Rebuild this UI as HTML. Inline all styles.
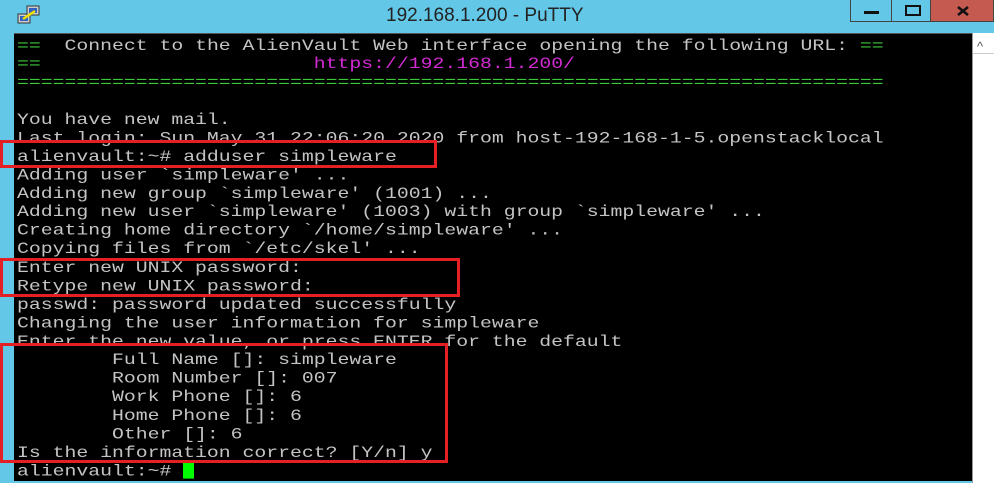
<!DOCTYPE html>
<html><head><style>
body{margin:0;width:994px;height:483px;overflow:hidden;background:#63c8e8;position:relative;font-family:"Liberation Sans",sans-serif}
.title{position:absolute;left:0;top:0;width:994px;height:33px;background:#63c8e8}
.ttext{position:absolute;left:386px;top:5px;font-size:19px;color:#222}
.btn{position:absolute;top:0;height:22px;border:1px solid #444;border-top:none;box-sizing:border-box}
.term{position:absolute;left:14px;top:33px;width:958px;height:447px;background:#000;border-top:1px solid #555}
.sb{position:absolute;left:972px;top:33px;width:22px;height:450px;background:#fff;border-left:1px solid #999}
pre{position:absolute;left:17px;top:37px;margin:0;font-family:"Liberation Mono",monospace;font-size:19.8px;line-height:23.125px;color:#c4c4c4;transform:scale(1,.8);transform-origin:0 0;letter-spacing:0}
.g{color:#3cc83c}.m{color:#d42ad4}
.box{position:absolute;border:3px solid #e52025;box-sizing:border-box}
.cur{display:inline-block;width:11px;height:20px;background:#0f0;vertical-align:-4px}
</style></head><body>
<div class="title">
<svg style="position:absolute;left:17px;top:5px" width="24" height="20"><rect x="1" y="9" width="12" height="9" fill="#ccc" stroke="#333"/><rect x="10" y="1" width="12" height="9" fill="#ccc" stroke="#333"/><rect x="3" y="11" width="8" height="5" fill="#3060c0"/><rect x="12" y="3" width="8" height="5" fill="#3060c0"/><path d="M6 14 L18 6" stroke="#f0e000" stroke-width="2.5"/></svg>
<div class="ttext">192.168.1.200 - PuTTY</div>
<div class="btn" style="left:850px;width:42px"><div style="position:absolute;left:13px;top:11px;width:15px;height:3px;background:#111"></div></div>
<div class="btn" style="left:891px;width:40px"><div style="position:absolute;left:13px;top:5px;width:12px;height:7px;border:2px solid #111"></div></div>
<div class="btn" style="left:930px;width:64px;background:#c55a50"><svg style="position:absolute;left:26px;top:6px" width="12" height="10"><path d="M1 1 L11 9 M11 1 L1 9" stroke="#111" stroke-width="2.6"/></svg></div>
</div>
<div class="term"></div>
<div class="sb"><div style="position:absolute;left:4px;top:6px;font-size:13px;color:#555">^</div><div style="position:absolute;left:0;top:20px;width:22px;border-top:1px solid #ccc"></div></div>
<pre><span class="g">==</span>  Connect to the AlienVault Web interface opening the following URL: <span class="g">==</span>
<span class="g">==</span>                      <span class="m"> https://192.168.1.200/</span>
<span class="g">=========================================================================</span>

You have new mail.
Last login: Sun May 31 22:06:20 2020 from host-192-168-1-5.openstacklocal
alienvault:~# adduser simpleware
Adding user `simpleware' ...
Adding new group `simpleware' (1001) ...
Adding new user `simpleware' (1003) with group `simpleware' ...
Creating home directory `/home/simpleware' ...
Copying files from `/etc/skel' ...
Enter new UNIX password:
Retype new UNIX password:
passwd: password updated successfully
Changing the user information for simpleware
Enter the new value, or press ENTER for the default
        Full Name []: simpleware
        Room Number []: 007
        Work Phone []: 6
        Home Phone []: 6
        Other []: 6
Is the information correct? [Y/n] y
alienvault:~# <span class="cur"></span></pre>
<div class="box" style="left:0;top:140px;width:437px;height:28px"></div>
<div class="box" style="left:0;top:258px;width:460px;height:39px"></div>
<div class="box" style="left:0;top:343px;width:448px;height:120px"></div>
</body></html>
